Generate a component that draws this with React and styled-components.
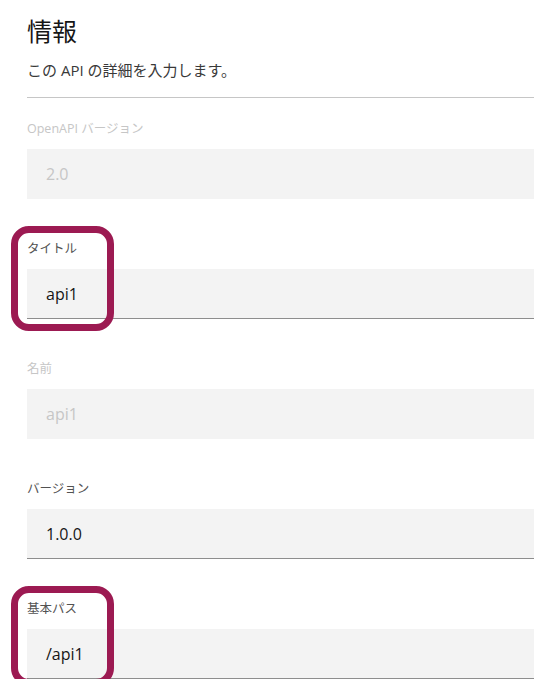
import React from 'react';
import styled, { createGlobalStyle } from 'styled-components';

const GlobalStyle = createGlobalStyle`
  body {
    margin: 0;
    background: #ffffff;
    font-family: 'Open Sans', 'Noto Sans CJK JP', sans-serif;
  }
`;

const Page = styled.div`
  width: 507px;
  padding: 15px 0 0 27px;
`;

const Heading = styled.h2`
  margin: 0;
  font-size: 25px;
  line-height: 32px;
  font-weight: 400;
  color: #161616;
`;

const Description = styled.p`
  margin: 13px 0 0;
  font-size: 15px;
  line-height: 20px;
  color: #393939;
`;

const Divider = styled.hr`
  margin: 17px 0 0;
  border: none;
  border-top: 1px solid #c6c6c6;
`;

const Fields = styled.div`
  display: flex;
  flex-direction: column;
  gap: 42px;
  padding-top: 23px;
`;

const Field = styled.div`
  position: relative;
  display: flex;
  flex-direction: column;
  gap: 12px;
`;

const Label = styled.label`
  font-size: 12.5px;
  line-height: 16px;
  color: ${(p) => (p.disabled ? '#c6c6c6' : '#525252')};
`;

const Input = styled.div`
  box-sizing: border-box;
  height: 50px;
  display: flex;
  align-items: center;
  padding: 0 19px;
  background: #f3f3f3;
  border-bottom: 1px solid ${(p) => (p.disabled ? 'transparent' : '#8d8d8d')};
  font-size: 16px;
  color: ${(p) => (p.disabled ? '#c6c6c6' : '#161616')};
`;

const Highlight = styled.div`
  position: absolute;
  left: -16px;
  top: -15px;
  width: 103px;
  height: ${(p) => p.h}px;
  box-sizing: border-box;
  border: 7px solid #9c1a52;
  border-radius: 18px;
  pointer-events: none;
`;

const fields = [
  { label: 'OpenAPI バージョン', value: '2.0', disabled: true },
  { label: 'タイトル', value: 'api1', highlight: 105 },
  { label: '名前', value: 'api1', disabled: true },
  { label: 'バージョン', value: '1.0.0' },
  { label: '基本パス', value: '/api1', highlight: 100 },
];

const App = () => {
  return (
    <>
      <GlobalStyle />
      <Page>
        <Heading>情報</Heading>
        <Description>この API の詳細を入力します。</Description>
        <Divider />
        <Fields>
          {fields.map((f) => (
            <Field key={f.label}>
              <Label disabled={f.disabled}>{f.label}</Label>
              <Input disabled={f.disabled}>{f.value}</Input>
              {f.highlight && <Highlight h={f.highlight} />}
            </Field>
          ))}
        </Fields>
      </Page>
    </>
  );
};

export default App;
